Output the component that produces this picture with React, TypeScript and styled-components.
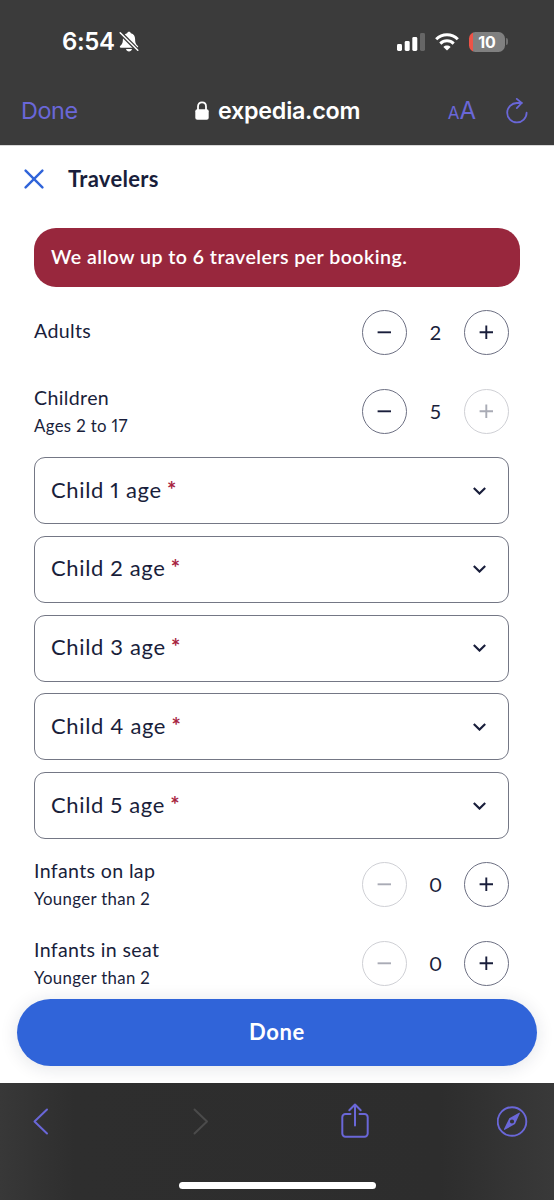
import React, { useState } from "react";
import styled, { createGlobalStyle } from "styled-components";

const ink = "#191e3b";
const tint = "#6a67d8";

const Global = createGlobalStyle`
  * { box-sizing: border-box; }
  body { margin: 0; background: #fff; }
  button { font: inherit; color: inherit; padding: 0; border: 0; background: none; }
  svg { display: block; flex: none; }
`;

const Screen = styled.div`
  display: flex;
  flex-direction: column;
  width: 554px;
  height: 1200px;
  overflow: hidden;
  background: #fff;
  color: ${ink};
  font-family: Lato, "Liberation Sans", sans-serif;
  font-variant-numeric: proportional-nums;
`;

const BrowserTop = styled.header`
  flex: none;
  height: 145px;
  background: #3b3b3b;
  color: #fff;
  font-family: Inter, "Liberation Sans", sans-serif;
`;

const StatusBar = styled.div`
  display: flex;
  align-items: center;
  height: 83px;
  padding: 0 46px 0 62px;
`;

const Clock = styled.span`
  font-size: 24px;
  font-weight: 600;
  letter-spacing: -0.4px;
  margin-right: 4px;
  width: 53px;
  white-space: nowrap;
`;

const StatusIcons = styled.div`
  display: flex;
  align-items: center;
  margin-left: auto;
`;

const Battery = styled.div`
  display: flex;
  align-items: center;
  justify-content: center;
  width: 36px;
  height: 20px;
  margin-left: 10px;
  border-radius: 6.5px;
  background: linear-gradient(90deg, #ee5347 4px, #808080 4px);
  font-size: 16px;
  font-weight: 700;
  letter-spacing: -0.2px;
`;

const BatteryTip = styled.i`
  width: 2px;
  height: 7px;
  margin-left: 1px;
  border-radius: 0 2px 2px 0;
  background: #707070;
`;

const AddressBar = styled.div`
  display: grid;
  grid-template-columns: 174px auto 1fr;
  align-items: center;
  height: 55px;
  padding: 0 26px 0 21px;
`;

const BrowserDone = styled.button`
  justify-self: start;
  color: ${tint};
  font-size: 23.4px;
  letter-spacing: -0.4px;
`;

const Host = styled.div`
  display: flex;
  align-items: center;
  gap: 9px;
  font-size: 23.3px;
  font-weight: 600;
  letter-spacing: -0.25px;
  white-space: nowrap;
`;

const AddressActions = styled.div`
  display: flex;
  align-items: center;
  justify-content: flex-end;
  gap: 30px;
  color: ${tint};
`;

const TextSize = styled.span`
  padding-top: 2px;
  font-size: 24px;
  line-height: 24px;
  small { font-size: 17px; }
`;

const Sheet = styled.main`
  flex: none;
  display: flex;
  flex-direction: column;
  height: 938px;
  border-top: 1px solid #d9d9d9;
`;

const SheetHeader = styled.div`
  display: flex;
  align-items: center;
  gap: 24px;
  height: 66px;
  padding-left: 24px;
  color: #3064d9;
`;

const Title = styled.h1`
  margin: 0;
  padding-bottom: 2px;
  color: ${ink};
  font-size: 22px;
  font-weight: 700;
  letter-spacing: 0.3px;
`;

const Alert = styled.div`
  display: flex;
  align-items: center;
  flex: none;
  height: 59px;
  margin: 16px 34px 0;
  padding: 0 17px 3px;
  border-radius: 22px;
  background: #98273d;
  color: #fff;
  font-size: 19.6px;
  font-weight: 600;
  letter-spacing: 0.45px;
  white-space: nowrap;
`;

const Form = styled.div`
  display: flex;
  flex-direction: column;
  padding: 23px 45px 0 34px;
`;

const Row = styled.div<{ $gap: number }>`
  display: flex;
  align-items: center;
  justify-content: space-between;
  height: 45px;
  margin-bottom: ${(p) => p.$gap}px;
`;

const Label = styled.div`
  font-size: 19.6px;
  line-height: 28px;
  letter-spacing: 0.35px;
  &:only-child { padding-bottom: 3px; }
`;

const Hint = styled.div`
  font-size: 16.8px;
  line-height: 27px;
  letter-spacing: 0.35px;
`;

const Stepper = styled.div`
  display: flex;
  align-items: center;
`;

const StepButton = styled.button`
  display: grid;
  place-items: center;
  width: 45px;
  height: 45px;
  border: 1px solid #6d7083;
  border-radius: 50%;
  color: ${ink};
  &:disabled { border-color: #cfd0d5; color: #a9abb5; }
`;

const Count = styled.span`
  width: 57px;
  padding-bottom: 2px;
  text-align: center;
  font-size: 20px;
`;

const Selects = styled.div`
  display: flex;
  flex-direction: column;
  gap: 11.8px;
  margin-bottom: 23px;
`;

const AgeSelect = styled.button`
  display: flex;
  align-items: center;
  justify-content: space-between;
  height: 67px;
  padding: 0 22px 0 16px;
  border: 1px solid #747785;
  border-radius: 11px;
  font-size: 22px;
`;

const AgeLabel = styled.span`
  padding-bottom: 3px;
  letter-spacing: 0.65px;
`;

const Required = styled.span`
  margin-left: -1px;
  color: #a7243f;
  font-weight: 700;
`;

const Submit = styled.button`
  flex: none;
  height: 67px;
  margin: 13px 17px 0;
  padding-bottom: 2px;
  border-radius: 34px;
  background: #3064d9;
  box-shadow: 0 2px 18px rgba(25, 30, 59, 0.12);
  color: #fff;
  font-size: 22px;
  font-weight: 700;
  letter-spacing: 0.6px;
`;

const BrowserBottom = styled.footer`
  flex: none;
  display: flex;
  flex-direction: column;
  align-items: center;
  justify-content: space-between;
  height: 117px;
  padding: 17px 26px 11px 33px;
  background: linear-gradient(90deg, #383838 0, #2e2e2e 75px, #2d2d2d 440px, #393939 554px);
  color: ${tint};
`;

const BrowserTools = styled.div`
  display: grid;
  grid-template-columns: 160px 148px 1fr auto;
  align-items: center;
  width: 100%;
  height: 42px;
`;

const HomeBar = styled.div`
  width: 197px;
  height: 7px;
  margin-right: 7px;
  border-radius: 4px;
  background: #fff;
`;

const MutedBell = () => (
  <svg width="20" height="22" viewBox="0 0 20 22">
    <path d="M10 .8c-1 0-1.700.6-1.900 1.500C5.300 3 3.900 5.200 3.900 8c0 4-.8 5.300-2.700 7-.8.800-.3 1.700.7 1.700h16.200c1 0 1.500-.9.700-1.700-1.900-1.700-2.700-3-2.700-7 0-2.800-1.400-5-4.200-5.700C11.700 1.400 11 .8 10 .8zM7 18h6c-.3 1.500-1.500 2.400-3 2.400S7.300 19.500 7 18z" fill="#fff" />
    <path d="M2 2.500l17 17" stroke="#3b3b3b" strokeWidth="4" />
    <path d="M1.200 1.700l17.600 17.600" stroke="#fff" strokeWidth="1.500" strokeLinecap="round" />
  </svg>
);

const SignalBars = styled.svg`
  margin-right: 10px;
`;

const Signal = () => (
  <SignalBars width="28" height="18" viewBox="0 0 28 18" fill="#fff">
    <rect x="0" y="11" width="5" height="7" rx="1.400" />
    <rect x="7.700" y="8" width="5" height="10" rx="1.400" />
    <rect x="15.300" y="4" width="5" height="14" rx="1.400" />
    <rect x="23" y="0" width="5" height="18" rx="1.400" fill="#666" />
  </SignalBars>
);

const Wifi = () => (
  <svg width="24" height="18" viewBox="0 0 24 18" fill="none" stroke="#fff" strokeWidth="3">
    <path d="M1.200 6.300C7.200 .2 16.800 .2 22.800 6.300" />
    <path d="M5.300 10.600c3.800-3.700 9.600-3.700 13.400 0" />
    <path d="M12 17.600l-3.600-3.700c2-1.900 5.200-1.900 7.200 0z" fill="#fff" stroke="none" />
  </svg>
);

const Lock = () => (
  <svg width="14" height="20" viewBox="0 0 14 20">
    <path d="M3 9V5.500C3 3 4.700 1.300 7 1.300S11 3 11 5.500V9" fill="none" stroke="#fff" strokeWidth="1.800" />
    <rect x=".3" y="8.300" width="13.400" height="10.500" rx="2" fill="#fff" />
  </svg>
);

const Reload = () => (
  <svg width="22" height="26" viewBox="0 0 22 26" fill="none" stroke="currentColor" strokeWidth="1.800" strokeLinecap="round" strokeLinejoin="round">
    <path d="M20.600 14.700A9.700 9.700 0 1 1 11 5h4.700" />
    <path d="M10.800 .9l4.900 4.100-4.900 5.100" />
  </svg>
);

const Cross = () => (
  <svg width="20" height="20" viewBox="0 0 20 20" stroke="currentColor" strokeWidth="2.400" strokeLinecap="round">
    <path d="M1.600 1.600l16.800 16.800M18.400 1.600L1.600 18.400" />
  </svg>
);

const Sign = ({ plus }: { plus?: boolean }) => (
  <svg width="15" height="15" viewBox="0 0 15 15" stroke="currentColor" strokeWidth="1.900">
    <path d={plus ? "M.6 7.300h13.400M7.300 .6v13.400" : "M.6 7.300h13.400"} />
  </svg>
);

const Chevron = () => (
  <svg width="13" height="8" viewBox="0 0 13 8" fill="none" stroke="currentColor" strokeWidth="2.100">
    <path d="M.8 .9l5.700 5.700L12.200 .9" />
  </svg>
);

const Back = () => (
  <svg width="16" height="27" viewBox="0 0 16 27" fill="none" stroke="currentColor" strokeWidth="2" strokeLinecap="round" strokeLinejoin="round">
    <path d="M14 1.500L1.500 13.500 14 25.500" />
  </svg>
);

const Forward = () => (
  <svg width="16" height="27" viewBox="0 0 16 27" fill="none" stroke="#4b4b4b" strokeWidth="2" strokeLinecap="round" strokeLinejoin="round">
    <path d="M1.500 1.500L14 13.500 1.500 25.500" />
  </svg>
);

const Share = () => (
  <svg width="28" height="36" viewBox="0 0 28 36" fill="none" stroke="currentColor" strokeWidth="2" strokeLinecap="round" strokeLinejoin="round">
    <path d="M9.500 11H4.500A3.200 3.200 0 0 0 1.300 14.200V30.500A3.200 3.200 0 0 0 4.500 33.700H23.500A3.200 3.200 0 0 0 26.700 30.500V14.200A3.200 3.200 0 0 0 23.500 11H18.500" />
    <path d="M14 22.500V1.600M8.300 7.200L14 1.500l5.700 5.700" />
  </svg>
);

const Compass = () => (
  <svg width="31" height="31" viewBox="0 0 31 31">
    <circle cx="15" cy="15.500" r="14.300" fill="none" stroke="currentColor" strokeWidth="1.900" />
    <path fillRule="evenodd" fill="currentColor" d="M22.800 7.400c.3-.5-.2-.9-.7-.6L12.300 12.300 7 23c-.3.700.2 1.100.8.800l10.200-5.700zM15 13.400a2.100 2.100 0 1 1 0 4.200 2.100 2.100 0 0 1 0-4.200z" />
  </svg>
);

type TravelerProps = {
  label: string;
  hint?: string;
  initial: number;
  min?: number;
  max?: number;
  gap?: number;
};

function TravelerRow({ label, hint, initial, min = 0, max = 6, gap = 34 }: TravelerProps) {
  const [count, setCount] = useState(initial);
  return (
    <Row $gap={gap}>
      <div>
        <Label>{label}</Label>
        {hint && <Hint>{hint}</Hint>}
      </div>
      <Stepper>
        <StepButton aria-label={`Decrease ${label}`} disabled={count <= min} onClick={() => setCount(count - 1)}>
          <Sign />
        </StepButton>
        <Count>{count}</Count>
        <StepButton aria-label={`Increase ${label}`} disabled={count >= max} onClick={() => setCount(count + 1)}>
          <Sign plus />
        </StepButton>
      </Stepper>
    </Row>
  );
}

export default function App() {
  return (
    <Screen>
      <Global />
      <BrowserTop>
        <StatusBar>
          <Clock>6:54</Clock>
          <MutedBell />
          <StatusIcons>
            <Signal />
            <Wifi />
            <Battery>10</Battery>
            <BatteryTip />
          </StatusIcons>
        </StatusBar>
        <AddressBar>
          <BrowserDone>Done</BrowserDone>
          <Host>
            <Lock />
            expedia.com
          </Host>
          <AddressActions>
            <TextSize>
              <small>A</small>A
            </TextSize>
            <Reload />
          </AddressActions>
        </AddressBar>
      </BrowserTop>
      <Sheet>
        <SheetHeader>
          <Cross />
          <Title>Travelers</Title>
        </SheetHeader>
        <Alert>We allow up to 6 travelers per booking.</Alert>
        <Form>
          <TravelerRow label="Adults" initial={2} min={1} />
          <TravelerRow label="Children" hint="Ages 2 to 17" initial={5} max={5} gap={23} />
          <Selects>
            {[1, 2, 3, 4, 5].map((n) => (
              <AgeSelect key={n}>
                <AgeLabel>
                  Child {n} age <Required>*</Required>
                </AgeLabel>
                <Chevron />
              </AgeSelect>
            ))}
          </Selects>
          <TravelerRow label="Infants on lap" hint="Younger than 2" initial={0} />
          <TravelerRow label="Infants in seat" hint="Younger than 2" initial={0} gap={0} />
        </Form>
        <Submit>Done</Submit>
      </Sheet>
      <BrowserBottom>
        <BrowserTools>
          <Back />
          <Forward />
          <Share />
          <Compass />
        </BrowserTools>
        <HomeBar />
      </BrowserBottom>
    </Screen>
  );
}
